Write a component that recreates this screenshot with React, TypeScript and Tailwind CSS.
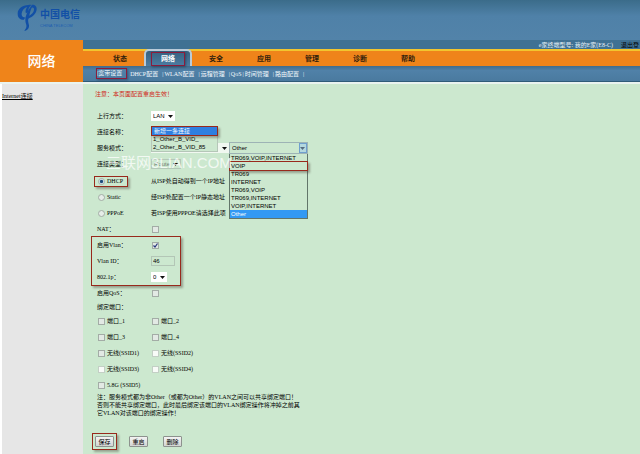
import React, { useState } from 'react';
import clsx from 'clsx';

const sans = "font-['Liberation_Sans','Noto_Sans_CJK_SC',sans-serif]";
const frame = 'outline outline-[#98291c] shadow-[2px_2px_2px_1px_rgba(70,60,50,0.4)]';
const navFrame = 'outline outline-[#8a1c3c] shadow-[1px_1px_2px_1px_rgba(20,20,40,0.4)]';

const tabs = ['状态', '网络', '安全', '应用', '管理', '诊断', '帮助'];

const subTabs = ['DHCP配置', 'WLAN配置', '远程管理', 'QoS', '时间管理', '路由配置'];

const services = [
  'TR069,VOIP,INTERNET',
  'VOIP',
  'TR069',
  'INTERNET',
  'TR069,VOIP',
  'TR069,INTERNET',
  'VOIP,INTERNET',
  'Other',
];

const modes = [
  { name: 'DHCP', text: '从ISP处自动得到一个IP地址' },
  { name: 'Static', text: '经ISP处配置一个IP静态地址' },
  { name: 'PPPoE', text: '若ISP使用PPPOE请选择此项' },
];

const ports = [
  { name: '端口_1' },
  { name: '端口_2' },
  { name: '端口_3' },
  { name: '端口_4' },
  { name: '无线(SSID1)' },
  { name: '无线(SSID2)', disabled: true },
  { name: '无线(SSID3)', disabled: true },
  { name: '无线(SSID4)', disabled: true },
  { name: '5.8G (SSID5)' },
];

const Logo = () => (
  <div className="flex items-center gap-[3px] pl-[17px] text-[#1250a6]">
    <svg viewBox="0 0 60 84" className="h-[28px] w-[20px]" fill="currentColor">
      <path d="M34 3C16 3 2 14 2 29c0 13 9 19 19 18l4-7c-8 1-12-4-11-12 1-9 8-17 17-19-5 6-7 14-4 19l7-4c-1-8 2-16 9-21-3-1-6 0-9 0z" />
      <path d="M45 2c-9 13-20 30-20 45 0 12 5 15 3 22-1 5-4 8-6 12 9-1 15-8 14-17-1-7-4-12-2-20 14-5 24-16 25-28C60 7 53 1 45 2zm-1 9c5-2 8 1 7 7-1 7-7 13-14 17 1-8 4-17 7-24z" />
    </svg>
    <div className={clsx('flex flex-col', sans)}>
      <span className="text-[10px] leading-4 font-bold">中国电信</span>
      <span className="text-[4px] leading-[6px] text-[#1f5fb0]">CHINA TELECOM</span>
    </div>
  </div>
);

const Arrow = () => (
  <svg viewBox="0 0 5 3" className="pointer-events-none col-start-1 row-start-1 mr-0.5 h-[3px] w-[5px] justify-self-end" fill="#111">
    <path d="M0 0h5L2.500 3z" />
  </svg>
);

type SelectProps = {
  id: string;
  label?: string;
  className: string;
  options: string[];
  disabled?: boolean;
};

const Select = ({ id, label, className, options, disabled }: SelectProps) => (
  <div className={clsx('grid h-2.5 items-center', sans, className)}>
    <select
      id={id}
      aria-label={label}
      disabled={disabled}
      className="col-start-1 row-start-1 h-2 w-full appearance-none pl-0.5 leading-2 opacity-100 outline-none"
    >
      {options.map((o) => (
        <option key={o}>{o}</option>
      ))}
    </select>
    <Arrow />
  </div>
);

type CheckProps = { id: string; defaultChecked?: boolean; disabled?: boolean };

const Check = ({ id, defaultChecked, disabled }: CheckProps) => (
  <span className="grid size-[7px]">
    <input
      id={id}
      type="checkbox"
      defaultChecked={defaultChecked}
      disabled={disabled}
      className="peer col-start-1 row-start-1 size-[7px] appearance-none border border-[#a3aca6] bg-[#e2e9e4] disabled:border-[#c3cfc5] disabled:bg-[#f8fbf8]"
    />
    <svg viewBox="0 0 7 7" className="pointer-events-none invisible col-start-1 row-start-1 size-[7px] peer-checked:visible" fill="none" stroke="#27347c" strokeWidth="1.200">
      <path d="M1.500 3.500L3 5l2.500-3.500" />
    </svg>
  </span>
);

type RowProps = { label: string; htmlFor: string; children: React.ReactNode };

const Row = ({ label, htmlFor, children }: RowProps) => (
  <div className="flex h-4 items-center">
    <label htmlFor={htmlFor} className="w-[54px] shrink-0">{label}</label>
    {children}
  </div>
);

const Button = ({ children }: { children: React.ReactNode }) => (
  <button
    type="button"
    className="h-[11px] w-[19px] rounded-[1px] border border-[#8d928e] bg-linear-to-b from-[#f4f4f4] to-[#d2d4d2] text-center leading-2 whitespace-nowrap"
  >
    {children}
  </button>
);

const Header = () => (
  <header className="flex h-10 items-center bg-linear-to-b from-[#3b6c8a] via-[#4f81a8] via-40% to-[#5283a9] pb-1">
    <Logo />
  </header>
);

const Navigation = () => (
  <div className="min-w-0 flex-1">
    <div className="flex h-[9px] items-center justify-end gap-2 bg-[#3f7193] pr-px whitespace-nowrap">
      <span className="text-[#e6f0f6]">e家终端型号: 我的E家(E8-C)</span>
      <a href="#" className="text-black">退出登</a>
    </div>
    <nav className="flex h-[17px] border-t-2 border-[#f2c52e] bg-[#ef841a] pl-[13px] text-[7px] leading-3 font-bold">
      {tabs.map((tab) => (
        <a
          key={tab}
          href="#"
          className={clsx(
            'flex w-12 shrink-0 items-center justify-center',
            tab === '网络'
              ? '-mt-0.5 rounded-t-[5px] border-2 border-b-0 border-[#b9cbd9] bg-linear-to-b from-[#37617f] to-[#4c7da3] text-white'
              : 'text-[#33210c]',
          )}
        >
          <span className={clsx(tab === '网络' && 'px-[9px]', tab === '网络' && navFrame)}>{tab}</span>
        </a>
      ))}
    </nav>
    <div className="flex h-4 items-center border-b border-[#2f5b78] bg-linear-to-b from-[#416c8c] via-[#5081a8] via-30% to-[#4a7a9f] pl-3.5 whitespace-nowrap text-[#f4f9fc]">
      <a href="#" className={clsx('pr-1 leading-[9px]', navFrame)}>|宽带设置</a>
      {subTabs.map((tab) => (
        <React.Fragment key={tab}>
          <a href="#" className="pl-1">{tab}</a>
          <span className={clsx(tab === 'QoS' ? 'pl-px' : 'pl-1', '-mr-[3px]')}>|</span>
        </React.Fragment>
      ))}
    </div>
  </div>
);

export default function App() {
  const [mode, setMode] = useState('DHCP');

  return (
    <div className="flex min-h-screen flex-col bg-[#cce8cf] font-['Liberation_Serif','Noto_Sans_CJK_SC',serif] text-[6px] leading-2 text-black">
      <Header />
      <div className="flex border-b-2 border-[#e9f3ef]">
        <div className={clsx('flex w-[83px] shrink-0 items-center justify-center bg-[#ef841a] text-[14px] font-medium text-white', sans)}>
          网络
        </div>
        <Navigation />
      </div>

      <div className="flex flex-1">
        <aside className="w-[83px] shrink-0 border-l-2 border-white bg-[#e6e6e6] pt-2">
          <a href="#" className="underline">Internet连接</a>
        </aside>

        <main className="min-w-0 flex-1 pl-3">
          <p className="flex h-5 items-center text-[#d0281c]">注意：本页面配置重启生效！</p>

          <form className="pt-1 pl-0.5">
            <Row label="上行方式：" htmlFor="uplink">
              <Select id="uplink" className="w-6 bg-white" options={['LAN']} />
            </Row>

            <Row label="连接名称：" htmlFor="conn">
              <div className="relative">
                <Select id="conn" className="w-[67px]" options={['新增一条连接']} />
                <ul role="listbox" aria-label="连接名称" className={clsx('absolute top-0 left-0 z-10 w-[67px] border border-t-0 border-[#b5c6b8] bg-[#cce8cf]', sans)}>
                  <li role="option" aria-selected="true" className={clsx('relative bg-[#2f7fe0] pl-0.5 text-white', frame)}>新增一条连接</li>
                  <li role="option" aria-selected="false" className="pl-px">1_Other_B_VID_</li>
                  <li role="option" aria-selected="false" className="pl-px">2_Other_B_VID_85</li>
                </ul>
              </div>
            </Row>

            <Row label="服务模式：" htmlFor="service">
              <Select id="service" className="w-[78px] bg-[#f1f8f1]" options={['Other']} />
              <div className={clsx('relative w-[79px]', sans)}>
                <div className="flex border border-[#9db3b5]">
                  <Select id="serviceList" label="服务列表" className="flex-1" options={['Other']} />
                  <span className="pointer-events-none -ml-2 w-2 border border-[#6f9fce] bg-[#9cc8f0]/50" />
                </div>
                <ul role="listbox" aria-label="服务列表" className="absolute top-full left-0 z-10 w-full border border-t-0 border-[#62756a] bg-[#cce8cf]">
                  {services.map((s) => (
                    <li
                      key={s}
                      role="option"
                      aria-selected={s === 'Other'}
                      className={clsx('pl-px', s === 'VOIP' && 'relative', s === 'VOIP' && frame, s === 'Other' && 'bg-[#3399f4] text-white')}
                    >
                      {s}
                    </li>
                  ))}
                </ul>
              </div>
            </Row>

            <div className="relative">
              <Row label="连接类型：" htmlFor="type">
                <Select id="type" className="w-[30px] border border-[#b4c8b8] text-[#6f7f73]" options={['Route']} disabled />
              </Row>
              <span className={clsx('pointer-events-none absolute -top-px left-[9px] z-20 text-[15px] leading-4 whitespace-nowrap text-white/75', sans)}>
                三联网3LIAN.COM
              </span>
            </div>

            <div className="pt-px">
              {modes.map((m) => (
                <div key={m.name} className="flex h-4 items-center">
                  <div className="w-[54px]">
                    <div className={clsx('-ml-0.5 flex h-[9px] w-8 items-center gap-0.5 pl-[3px]', m.name === 'DHCP' && frame)}>
                      <input
                        id={m.name}
                        type="radio"
                        name="mode"
                        checked={mode === m.name}
                        onChange={() => setMode(m.name)}
                        className="size-[7px] shrink-0 appearance-none rounded-full border border-[#a3ada6] bg-[#e6ede8] checked:bg-[radial-gradient(#1d4d7c_35%,#dceaf2_60%)]"
                      />
                      <label htmlFor={m.name}>{m.name}</label>
                    </div>
                  </div>
                  <span>{m.text}</span>
                </div>
              ))}
            </div>

            <Row label="NAT：" htmlFor="nat">
              <span className="pl-px"><Check id="nat" /></span>
            </Row>

            <div className={clsx('-ml-[5px] w-[88px] pl-[5px]', frame)}>
              <Row label="启用Vlan：" htmlFor="vlan">
                <span className="pl-px"><Check id="vlan" defaultChecked /></span>
              </Row>
              <Row label="Vlan ID：" htmlFor="vlanId">
                <input id="vlanId" defaultValue="46" className={clsx('h-2.5 w-6 border border-[#b3c6b6] pl-px leading-2', sans)} />
              </Row>
              <Row label="802.1p：" htmlFor="priority">
                <Select id="priority" className="w-4 bg-white" options={['0']} />
              </Row>
            </div>

            <Row label="启用QoS：" htmlFor="qos">
              <span className="pl-px"><Check id="qos" /></span>
            </Row>

            <fieldset>
              <legend className="h-3 leading-3">绑定端口：</legend>
              <div className="grid grid-cols-[54px_54px] pl-px">
                {ports.map((p) => (
                  <div key={p.name} className="flex h-4 items-center gap-0.5">
                    <Check id={p.name} disabled={p.disabled} />
                    <label htmlFor={p.name} className="whitespace-nowrap">{p.name}</label>
                  </div>
                ))}
              </div>
            </fieldset>

            <p className="w-[210px]">
              注：服务模式都为非Other（或都为Other）的VLAN之间可以共享绑定端口！
              <br />
              否则不能共享绑定端口，此时最后绑定该端口的VLAN绑定操作将冲掉之前其
              <br />
              它VLAN对该端口的绑定操作！
            </p>

            <div className="-ml-1 flex items-center gap-[13px] pt-[17px] pb-1">
              <span className={clsx('flex p-0.5', frame)}>
                <Button>保存</Button>
              </span>
              <Button>重启</Button>
              <span className="flex pl-0.5">
                <Button>删除</Button>
              </span>
            </div>
          </form>
        </main>
      </div>
    </div>
  );
}
